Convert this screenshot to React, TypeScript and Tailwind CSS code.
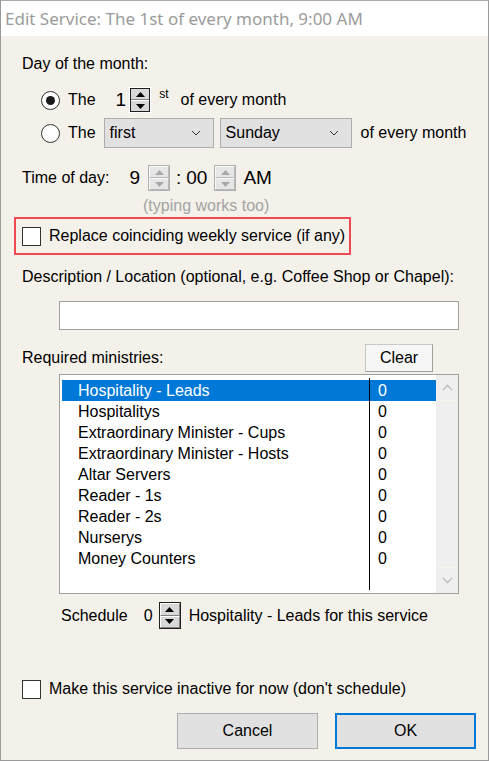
import React from 'react';

const ministries = [
  'Hospitality - Leads',
  'Hospitalitys',
  'Extraordinary Minister - Cups',
  'Extraordinary Minister - Hosts',
  'Altar Servers',
  'Reader - 1s',
  'Reader - 2s',
  'Nurserys',
  'Money Counters',
];

const Spinner: React.FC<{ disabled?: boolean; className?: string }> = ({ disabled, className = '' }) => {
  const fill = disabled ? '#a8a8a8' : '#000';
  const half = disabled
    ? 'flex-1 flex items-center justify-center bg-[#e6e6e6] border border-t-[#f8f8f8] border-l-[#f8f8f8] border-r-[#b8b8b8] border-b-[#b8b8b8]'
    : 'flex-1 flex items-center justify-center bg-[#d8d8d8] border border-t-white border-l-white border-r-[#808080] border-b-[#808080]';
  return (
    <div
      className={`flex flex-col w-[22px] h-[26px] border ${
        disabled ? 'border-[#b0b0b0]' : 'border-[#202020]'
      } ${className}`}
    >
      <div className={half}>
        <svg width="9" height="5" viewBox="0 0 9 5">
          <polygon points="4.5,0 9,5 0,5" fill={fill} />
        </svg>
      </div>
      <div className={half}>
        <svg width="9" height="5" viewBox="0 0 9 5">
          <polygon points="0,0 9,0 4.5,5" fill={fill} />
        </svg>
      </div>
    </div>
  );
};

const Radio: React.FC<{ checked?: boolean }> = ({ checked }) => (
  <div className="w-[19px] h-[19px] rounded-full border border-[#333] bg-white flex items-center justify-center">
    {checked && <div className="w-[9px] h-[9px] rounded-full bg-[#1a1a1a]" />}
  </div>
);

const Checkbox: React.FC = () => <div className="w-[19px] h-[19px] border border-[#333] bg-white" />;

const Select: React.FC<{ label: string; width: string }> = ({ label, width }) => (
  <div
    className={`${width} h-[30px] flex items-center justify-between pl-[5px] pr-[12px] bg-[#e1e1e1] border border-[#adadad]`}
  >
    <span>{label}</span>
    <svg width="10" height="6" viewBox="0 0 10 6">
      <polyline points="1,1 5,5 9,1" fill="none" stroke="#333" strokeWidth="1" />
    </svg>
  </div>
);

export default function App() {
  return (
    <div
      className="w-[489px] h-[761px] flex flex-col border border-t-[#aaaaaa] border-[#9a9a9a] bg-[#f4f1ea] text-[16px] text-black overflow-hidden"
      style={{ fontFamily: '"Liberation Sans", Arial, sans-serif' }}
    >
      <div
        className="h-[35px] bg-white flex items-center pl-[4px] text-[17px] text-[#9b9b9b] shrink-0"
        style={{ fontFamily: '"Noto Sans", "Open Sans", sans-serif' }}
      >
        Edit Service: The 1st of every month, 9:00 AM
      </div>

      <div className="flex flex-col pl-[21px]">
        <div className="mt-[18px] h-[20px] leading-[20px]">Day of the month:</div>

        <div className="mt-[13px] h-[26px] flex items-center">
          <div className="ml-[19px]">
            <Radio checked />
          </div>
          <span className="ml-[8px]">The</span>
          <span className="ml-[20px] text-[19px]">1</span>
          <Spinner className="ml-[3px] border-white outline outline-[#202020] -outline-offset-2" />
          <span className="ml-[8px] self-start text-[12px] leading-[12px] mt-[1px]">st</span>
          <span className="ml-[12px]">of every month</span>
        </div>

        <div className="mt-[5px] h-[30px] flex items-center">
          <div className="ml-[19px]">
            <Radio />
          </div>
          <span className="ml-[8px]">The</span>
          <div className="ml-[8px]">
            <Select label="first" width="w-[110px]" />
          </div>
          <div className="ml-[6px]">
            <Select label="Sunday" width="w-[132px]" />
          </div>
          <span className="ml-[9px]">of every month</span>
        </div>

        <div className="mt-[17px] h-[26px] flex items-center">
          <span>Time of day:</span>
          <span className="ml-[20px] text-[19px]">9</span>
          <Spinner disabled className="ml-[8px]" />
          <span className="ml-[6px] text-[19px]">:</span>
          <span className="ml-[5px] text-[19px]">00</span>
          <Spinner disabled className="ml-[7px]" />
          <span className="ml-[7px] text-[19px]">AM</span>
        </div>

        <div className="mt-[5px] h-[20px] leading-[20px] pl-[121px] text-[#a3a3a3]">(typing works too)</div>

        <div className="mt-[1px] -ml-[8px] w-[337px] h-[38px] border-2 border-[#ef4a52] flex items-center pl-[6px]">
          <Checkbox />
          <span className="ml-[8px]">Replace coinciding weekly service (if any)</span>
        </div>

        <div className="mt-[12px] h-[20px] leading-[20px]">Description / Location (optional, e.g. Coffee Shop or Chapel):</div>

        <div className="mt-[14px] ml-[37px] w-[400px] h-[29px] bg-white border border-[#a0a0a0]" />

        <div className="mt-[14px] h-[28px] flex items-center">
          <span className="flex-1">Required ministries:</span>
          <div className="mr-[55px] w-[68px] h-[28px] flex items-center justify-center bg-[#f6f6f6] border border-[#c8c8c8] border-b-[#a0a0a0] border-r-[#a0a0a0]">
            Clear
          </div>
        </div>

        <div className="mt-[2px] ml-[37px] w-[400px] h-[220px] bg-white border border-[#a0a0a0] flex relative">
          <div className="flex-1 flex flex-col pt-[5px] pl-[2px]">
            {ministries.map((m, i) => (
              <div
                key={m}
                className={`h-[21px] flex items-center ${i === 0 ? 'bg-[#0078d7] text-white' : ''}`}
              >
                <span className="pl-[16px] w-[309px]">{m}</span>
                <span className="pl-[7px]">0</span>
              </div>
            ))}
          </div>
          <div className="w-[22px] bg-[#efefef] flex flex-col justify-between items-center">
            <div className="h-[26px] w-full flex items-center justify-center border-b border-[#f6f4e8]">
              <svg width="11" height="7" viewBox="0 0 11 7">
                <polyline points="1,6 5.5,1.5 10,6" fill="none" stroke="#c2c2c2" strokeWidth="1.6" />
              </svg>
            </div>
            <div className="h-[26px] w-full flex items-center justify-center border-t border-[#f6f4e8]">
              <svg width="11" height="7" viewBox="0 0 11 7">
                <polyline points="1,1 5.5,5.5 10,1" fill="none" stroke="#c2c2c2" strokeWidth="1.6" />
              </svg>
            </div>
          </div>
          <div className="absolute left-[309px] top-[3px] bottom-[3px] w-[1px] bg-black" />
        </div>

        <div className="mt-[8px] h-[27px] flex items-center pl-[39px]">
          <span>Schedule</span>
          <span className="ml-[16px]">0</span>
          <Spinner className="ml-[6px] h-[27px]" />
          <span className="ml-[8px]">Hospitality - Leads for this service</span>
        </div>

        <div className="mt-[50px] h-[20px] flex items-center">
          <Checkbox />
          <span className="ml-[8px]">Make this service inactive for now (don't schedule)</span>
        </div>

        <div className="mt-[14px] flex justify-end pr-[12px] gap-[17px]">
          <div className="w-[141px] h-[36px] flex items-center justify-center bg-[#e1e1e1] border border-[#adadad]">
            Cancel
          </div>
          <div className="w-[141px] h-[36px] flex items-center justify-center bg-[#e1e1e1] border-2 border-[#0078d7]">
            OK
          </div>
        </div>
      </div>
    </div>
  );
}
